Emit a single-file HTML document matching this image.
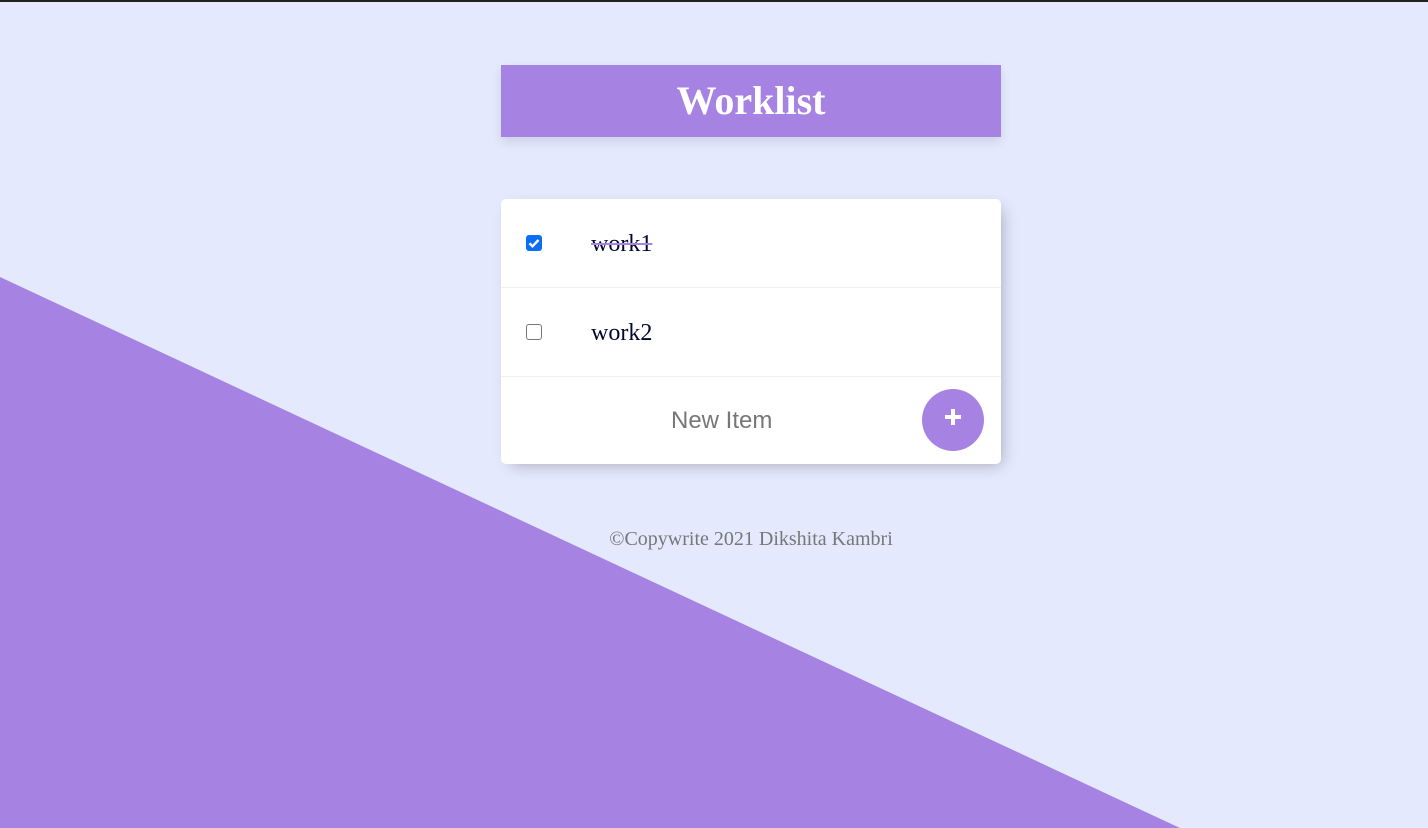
<!DOCTYPE html>
<html><head><style>
html,body{margin:0;padding:0;width:1428px;height:828px;overflow:hidden;background:#E4E9FD;font-family:"Liberation Serif",serif;}
.top{position:absolute;left:0;top:0;width:1428px;height:2px;background:#222;}
.tri{position:absolute;left:0;top:0;}
.hdr{position:absolute;left:501px;top:65px;width:500px;height:72px;background:#A683E3;box-shadow:0 5px 10px rgba(0,0,0,0.1);color:#fff;font-weight:bold;font-size:40px;text-align:center;line-height:72px;}
.card{position:absolute;left:501px;top:199px;width:500px;height:265px;background:#fff;border-radius:5px;box-shadow:5px 5px 15px -5px rgba(0,0,0,0.3);}
.row{position:relative;height:88px;border-bottom:1px solid #F1F1F1;}
.cb{position:absolute;left:25px;top:36px;width:16px;height:16px;box-sizing:border-box;border-radius:3px;}
.cb.on{background:#0B6EF5;}
.cb.off{border:1px solid #767676;background:#fff;}
.txt{position:absolute;left:90px;top:29px;font-size:24px;color:#00072D;line-height:32px;}
.strike{text-decoration:line-through;text-decoration-color:#A683E3;text-decoration-thickness:2px;}
.new{position:absolute;left:170px;top:30px;font-family:"Liberation Sans",sans-serif;font-size:24px;color:#777;}
.btn{position:absolute;left:421px;top:12px;width:62px;height:62px;border-radius:50%;background:#A683E3;}
.foot{position:absolute;left:0;width:1502px;top:528px;text-align:center;font-size:20px;color:#777;}
</style></head><body>
<svg class="tri" width="1428" height="828"><polygon points="0,277 1180,828 0,828" fill="#A683E3"/></svg>
<div class="top"></div>
<div class="hdr">Worklist</div>
<div class="card">
<div class="row"><div class="cb on"><svg width="16" height="16"><path d="M3.5 8.3l3 3L12.5 5" stroke="#fff" stroke-width="2.4" fill="none"/></svg></div><div class="txt strike">work1</div></div>
<div class="row"><div class="cb off"></div><div class="txt">work2</div></div>
<div class="row" style="border:none"><div class="new">New Item</div><div class="btn"><svg width="62" height="62"><path d="M31 20v16M23 28h16" stroke="#fff" stroke-width="4"/></svg></div></div>
</div>
<div class="foot">©Copywrite 2021 Dikshita Kambri</div>
</body></html>
